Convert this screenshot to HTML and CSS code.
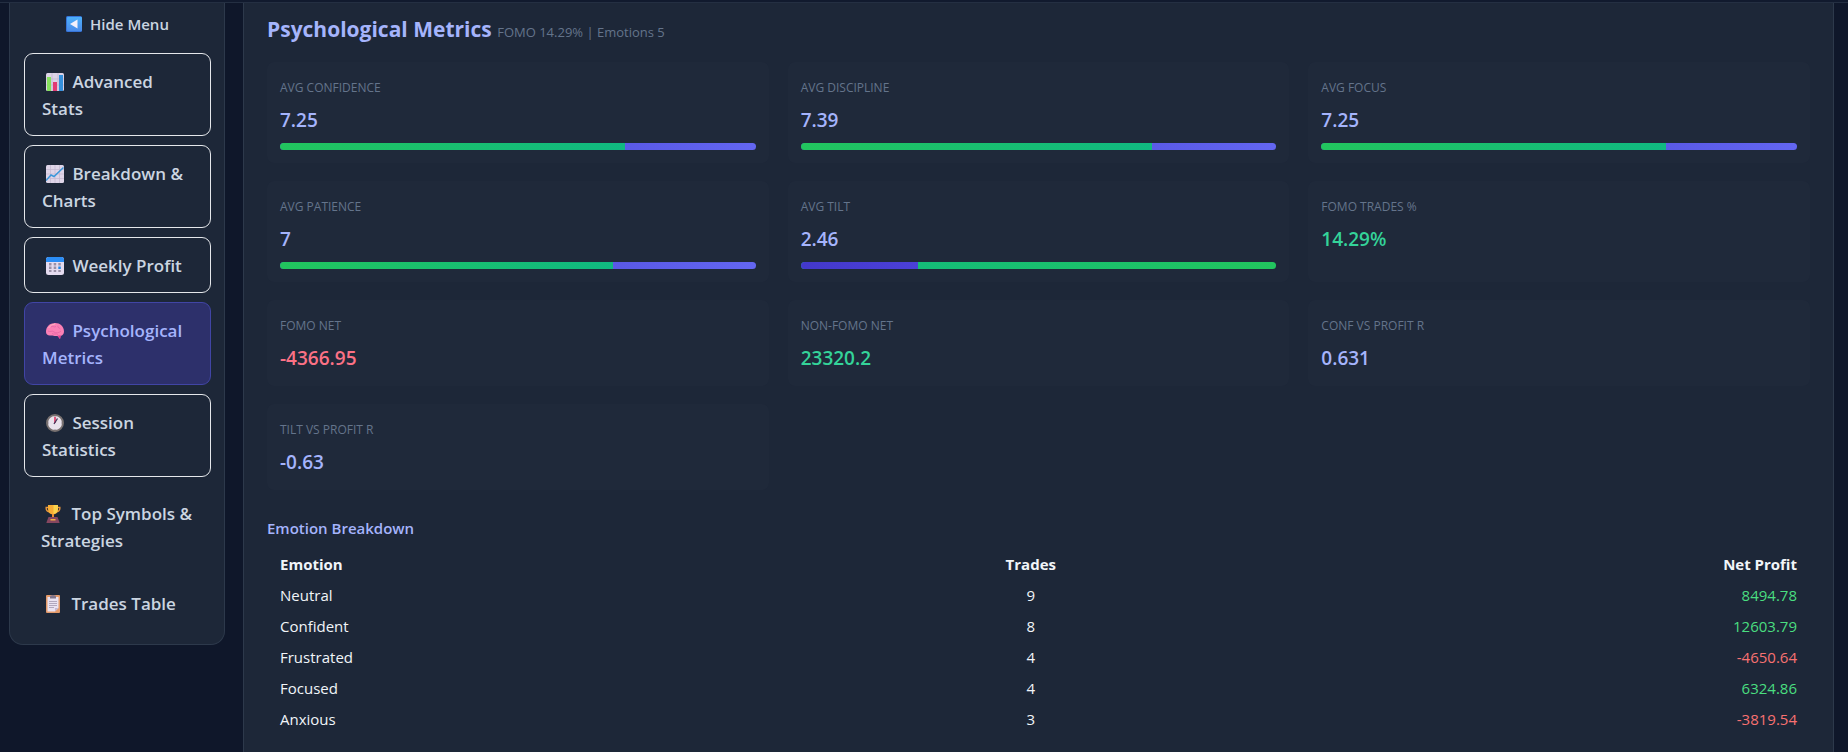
FILE: index.html
```html
<!DOCTYPE html>
<html lang="en">
<head>
    <meta charset="UTF-8">
    <meta name="viewport" content="width=device-width, initial-scale=1.0">
    <title>Psychological Metrics</title>
    <link rel="stylesheet" href="styles.css">
</head>
<body>
    <header class="topbar"></header>

    <div class="layout">
        <aside class="sidebar">
            <button type="button" class="toggle-menu">
                <svg class="icon-small" viewBox="0 0 16 16" aria-hidden="true">
                    <defs>
                        <linearGradient id="blue" x1="0" y1="0" x2="0" y2="1"><stop offset="0" stop-color="#4cb0fb"/><stop offset="1" stop-color="#4b8be9"/></linearGradient>
                    </defs>
                    <rect width="16" height="16" rx="1.5" fill="#3674d8"/>
                    <rect x="1" y="1" width="15" height="14" rx="1" fill="url(#blue)"/>
                    <path d="M4 8 L11.5 3.6 V12.4 Z" fill="#f4f0fb"/>
                </svg>
                Hide Menu
            </button>

            <nav class="menu">
                <button type="button" class="menu-item">
                    <svg class="icon" viewBox="0 0 18 18" aria-hidden="true">
                        <rect width="18" height="18" rx="1.5" fill="#dcd3e6"/>
                        <path d="M6 0V18M12 0V18M0 6H18M0 12H18" stroke="#c0b5cd" stroke-width=".7"/>
                        <rect x="1" y="4" width="4" height="14" fill="#86e05e"/>
                        <rect x="7" y="9" width="4" height="9" fill="#e23a72"/>
                        <rect x="13" y="2" width="4" height="16" fill="#3590dc"/>
                    </svg>
                    Advanced Stats
                </button>
                <button type="button" class="menu-item">
                    <svg class="icon" viewBox="0 0 18 18" aria-hidden="true">
                        <rect width="18" height="18" rx="1.5" fill="#dfd5e8"/>
                        <path d="M4.500 0V18M9 0V18M13.500 0V18M0 4.500H18M0 9H18M0 13.500H18" stroke="#c3b8d0" stroke-width=".7"/>
                        <path d="M0 15.500 L5 10 L8 11.500 L17.500 2.500" fill="none" stroke="#3a97da" stroke-width="1.500"/>
                    </svg>
                    Breakdown &amp; Charts
                </button>
                <button type="button" class="menu-item">
                    <svg class="icon" viewBox="0 0 18 18" aria-hidden="true">
                        <rect width="18" height="18" rx="2.500" fill="#e4dbef"/>
                        <path d="M0 5V2.500Q0 0 2.500 0H15.500Q18 0 18 2.500V5Z" fill="#2b8df5"/>
                        <path d="M3 6h2.500v2.500H3zM7.700 6h2.500v2.500H7.700zM12.300 6h2.500v2.500H12.300zM3 9.500h2.500v2.500H3zM7.700 9.500h2.500v2.500H7.700zM3 13h2.500v2H3zM7.700 13h2.500v2H7.700zM12.300 13h2.500v2H12.300z" fill="#9990a7"/>
                        <rect x="12.300" y="9.500" width="2.500" height="2.500" fill="#2288e8"/>
                    </svg>
                    Weekly Profit
                </button>
                <button type="button" class="menu-item active">
                    <svg class="icon" viewBox="0 0 18 18" aria-hidden="true">
                        <path d="M0 10C0 5 3 1.500 8 1.200C13 .5 18 4 18 9.500C18 12 16.500 13.500 14.500 14L14 17L11.500 14C8 14.500 6.500 13 5 13.500C2 14 0 12.500 0 10Z" fill="#fb80b5"/>
                        <path d="M11.500 13.500L14 17L15 13.500Z" fill="#dc3f91"/>
                        <path d="M2 9C4 10.500 6 8 8 10C10 11.500 13 11 15 9M5 5C6.500 3 8 6 10 4.500M12 3.500C11 6 14 6 14.500 7M6 11.500C8 13 10 11 12 12.500" fill="none" stroke="#e564a5" stroke-width=".8"/>
                        <path d="M2.500 6Q5 2 9 2" fill="none" stroke="#ffb3bd" stroke-width="1"/>
                    </svg>
                    Psychological Metrics
                </button>
                <button type="button" class="menu-item">
                    <svg class="icon" viewBox="0 0 18 18" aria-hidden="true">
                        <circle cx="9" cy="9" r="8" fill="#e9e3ec" stroke="#77706f" stroke-width="2"/>
                        <path d="M9 3V1.800M9 16.200V15M3 9H1.800M16.200 9H15" stroke="#8d8492" stroke-width=".8"/>
                        <path d="M9 9V3" stroke="#e22b5b" stroke-width="1.500"/>
                        <path d="M8 10L11.500 4.500" stroke="#43365a" stroke-width="1.300"/>
                    </svg>
                    Session Statistics
                </button>
                <button type="button" class="menu-item plain">
                    <svg class="icon" viewBox="0 0 18 18" aria-hidden="true">
                        <path d="M4 2.500H1.200V4Q1.500 6.500 5 7M12 2.500H14.800V4Q14.500 6.500 11 7" fill="none" stroke="#e9963b" stroke-width="1.400"/>
                        <path d="M3 0H13V4Q13 9 8 9.500Q3 9 3 4Z" fill="#f7ad35"/>
                        <path d="M8.500 0H13V4Q13 8 8.500 9Z" fill="#fbd34d"/>
                        <path d="M7 9H9V13H7Z" fill="#e88b35"/>
                        <path d="M3.500 12H12.500L14.500 17.200V18H1.500V17.200Z" fill="#86465f"/>
                        <rect x="5.500" y="14" width="5" height="1.500" fill="#f0ae45"/>
                    </svg>
                    Top Symbols &amp; Strategies
                </button>
                <button type="button" class="menu-item plain">
                    <svg class="icon" viewBox="0 0 18 18" aria-hidden="true">
                        <rect x="1" width="14" height="18" rx="1" fill="#e39a6a"/>
                        <path d="M2.500 2H13.500V13L10 16.500H2.500Z" fill="#e9e2f2"/>
                        <path d="M10 16.500V13H13.500Z" fill="#c5b8d4"/>
                        <path d="M5 3.500V1.500Q5 0 8 0Q11 0 11 1.500V3.500Z" fill="#80748a"/>
                        <path d="M4 6.500H12M4 8.500H12M4 10.500H12M4 12.500H9" stroke="#aaa0b8" stroke-width=".9"/>
                    </svg>
                    Trades Table
                </button>
            </nav>
        </aside>

        <main class="panel">
            <h2 class="panel-title">Psychological Metrics <small>FOMO 14.29% | Emotions 5</small></h2>

            <section class="cards">
                <div class="card">
                    <div class="label">Avg Confidence</div>
                    <div class="value">7.25</div>
                    <div class="bar"><div class="fill" style="width: 72.5%"></div></div>
                </div>
                <div class="card">
                    <div class="label">Avg Discipline</div>
                    <div class="value">7.39</div>
                    <div class="bar"><div class="fill" style="width: 73.9%"></div></div>
                </div>
                <div class="card">
                    <div class="label">Avg Focus</div>
                    <div class="value">7.25</div>
                    <div class="bar"><div class="fill" style="width: 72.5%"></div></div>
                </div>
                <div class="card">
                    <div class="label">Avg Patience</div>
                    <div class="value">7</div>
                    <div class="bar"><div class="fill" style="width: 70%"></div></div>
                </div>
                <div class="card">
                    <div class="label">Avg Tilt</div>
                    <div class="value">2.46</div>
                    <div class="bar inverse"><div class="fill" style="width: 24.6%"></div></div>
                </div>
                <div class="card">
                    <div class="label">FOMO Trades %</div>
                    <div class="value good">14.29%</div>
                </div>
                <div class="card">
                    <div class="label">FOMO Net</div>
                    <div class="value bad">-4366.95</div>
                </div>
                <div class="card">
                    <div class="label">Non-FOMO Net</div>
                    <div class="value good">23320.2</div>
                </div>
                <div class="card">
                    <div class="label">Conf vs Profit R</div>
                    <div class="value">0.631</div>
                </div>
                <div class="card">
                    <div class="label">Tilt vs Profit R</div>
                    <div class="value">-0.63</div>
                </div>
            </section>

            <h3 class="table-title" id="emotions">Emotion Breakdown</h3>
            <table class="emotions" aria-labelledby="emotions">
                <thead>
                    <tr><th>Emotion</th><th>Trades</th><th>Net Profit</th></tr>
                </thead>
                <tbody>
                    <tr><td>Neutral</td><td>9</td><td class="profit">8494.78</td></tr>
                    <tr><td>Confident</td><td>8</td><td class="profit">12603.79</td></tr>
                    <tr><td>Frustrated</td><td>4</td><td class="loss">-4650.64</td></tr>
                    <tr><td>Focused</td><td>4</td><td class="profit">6324.86</td></tr>
                    <tr><td>Anxious</td><td>3</td><td class="loss">-3819.54</td></tr>
                </tbody>
            </table>
        </main>
    </div>
</body>
</html>
```

FILE: styles.css
```css
* {
    box-sizing: border-box;
}
body {
    margin: 0;
    min-height: 100vh;
    display: flex;
    flex-direction: column;
    font-family: "Open Sans", "Noto Sans", sans-serif;
    font-size: 15px;
    color: #f1f5f9;
    background-color: #0f172a;
}
button {
    font-family: inherit;
    color: #cbd5e1;
    background: none;
    border: none;
    cursor: pointer;
}

.topbar {
    height: 3px;
    background-color: #111a2e;
    border-bottom: 1px solid #242f42;
}
.layout {
    flex: 1;
    display: flex;
    align-items: flex-start;
    gap: 18px;
    padding: 0 14px 0 9px;
}

/* sidebar */
.sidebar {
    flex: 0 0 216px;
    padding: 0 13px 14px 14px;
    background-color: #1d2738;
    border: 1px solid #2d394b;
    border-top: none;
    border-radius: 0 0 14px 14px;
}
.toggle-menu {
    display: flex;
    align-items: center;
    justify-content: center;
    gap: 8px;
    width: 100%;
    height: 42px;
    margin-bottom: 8px;
    padding: 0;
    font-size: 15px;
    font-weight: 600;
}
.icon-small {
    width: 16px;
    height: 16px;
}
.menu {
    display: flex;
    flex-direction: column;
    gap: 9px;
}
.menu-item {
    padding: 14px 12px 13px 17px;
    border: 1px solid #e5e7eb;
    border-radius: 9px;
    font-size: 17px;
    font-weight: 600;
    line-height: 27px;
    text-align: left;
}
.menu-item.plain {
    border: none;
}
.menu-item.active {
    color: #a5b4fc;
    background-color: #2d306b;
    border-color: #4145a5;
}
.icon {
    width: 18px;
    height: 18px;
    margin: 0 4px;
    vertical-align: -3px;
}

/* main panel */
.panel {
    flex: 1;
    align-self: stretch;
    padding: 8px 23px;
    background-color: #1d2738;
    border: 1px solid #2d394b;
    border-top: none;
    border-bottom: none;
}
.panel-title {
    margin: 0 0 15px;
    font-size: 21px;
    line-height: 36px;
    color: #a5b4fc;
}
.panel-title small {
    font-size: 13px;
    font-weight: 400;
    line-height: 1;
    color: #64748b;
}
.cards {
    display: grid;
    grid-template-columns: repeat(3, 1fr);
    gap: 18px 19px;
}
.card {
    padding: 17px 13px 13px;
    background-color: #1f293a;
    border-radius: 7px;
}
.label {
    margin-bottom: 8px;
    font-size: 12px;
    line-height: 18px;
    text-transform: uppercase;
    color: #64748b;
}
.value {
    font-size: 19px;
    font-weight: 600;
    line-height: 30px;
    color: #a5b4fc;
}
.value.good {
    color: #34d399;
}
.value.bad {
    color: #fb7185;
}
.bar {
    height: 7px;
    margin-top: 8px;
    overflow: hidden;
    border-radius: 4px;
    background: linear-gradient(90deg, #4338ca, #6366f1);
}
.fill {
    height: 100%;
    background: linear-gradient(90deg, #22c55e, #10b981);
}
.bar.inverse {
    background: linear-gradient(90deg, #10b981, #22c55e);
}
.bar.inverse .fill {
    background: linear-gradient(90deg, #4338ca, #4b40d8);
}

/* emotion table */
.table-title {
    margin: 26px 0 9px;
    font-size: 15px;
    font-weight: 600;
    line-height: 24px;
    color: #a5b4fc;
}
.emotions {
    width: 100%;
    border-collapse: collapse;
}
.emotions th,
.emotions td {
    padding: 4px 13px;
    line-height: 23px;
    text-align: center;
}
.emotions th:first-child,
.emotions td:first-child {
    width: 36%;
    text-align: left;
}
.emotions th:last-child,
.emotions td:last-child {
    width: 37%;
    text-align: right;
}
.profit {
    color: #4ade80;
}
.loss {
    color: #f87171;
}
```
